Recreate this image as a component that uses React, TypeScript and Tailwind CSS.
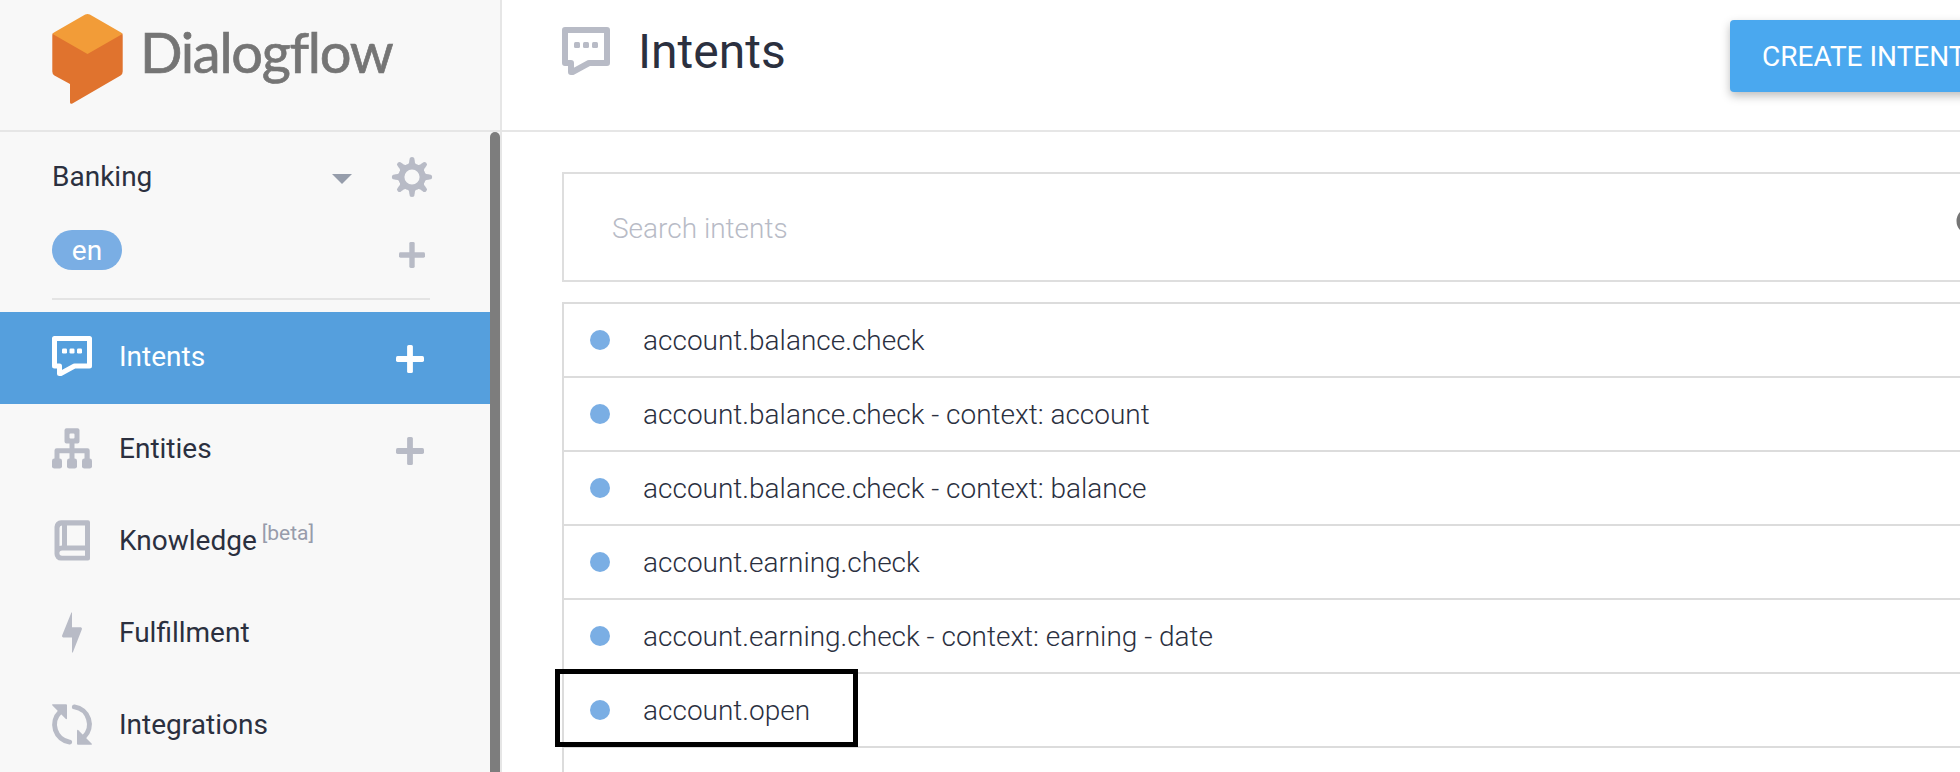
import type { ReactNode } from "react";

const intents = [
  "account.balance.check",
  "account.balance.check - context: account",
  "account.balance.check - context: balance",
  "account.earning.check",
  "account.earning.check - context: earning - date",
  "account.open",
];

function ChatIcon({ className }: { className: string }) {
  return (
    <svg viewBox="0 0 48 48" className={className} fill="none">
      <path d="M3 3H45V36H27L10.5 45H9V36H3Z" stroke="currentColor" strokeWidth="6" strokeLinejoin="round" />
      <g fill="currentColor">
        <rect x="12" y="15" width="6" height="6" rx="1.5" />
        <rect x="21" y="15" width="6" height="6" rx="1.5" />
        <rect x="30" y="15" width="6" height="6" rx="1.5" />
      </g>
    </svg>
  );
}

function EntitiesIcon() {
  return (
    <svg viewBox="0 0 40 40" className="size-10 shrink-0 overflow-visible" fill="currentColor">
      <path
        fillRule="evenodd"
        d="M14.5 0.3H25.5A2 2 0 0 1 27.5 2.3V13.4A2 2 0 0 1 25.5 15.4H22.5V20.3H35.5A2.2 2.2 0 0 1 37.7 22.5V31H32.5V25.3H22.5V31H17.5V25.3H7.5V31H2.5V22.5A2.2 2.2 0 0 1 4.7 20.3H17.5V15.4H14.5A2 2 0 0 1 12.5 13.4V2.3A2 2 0 0 1 14.5 0.3ZM18.5 5.4A1 1 0 0 0 17.5 6.4V9.6A1 1 0 0 0 18.5 10.6H21.5A1 1 0 0 0 22.5 9.6V6.4A1 1 0 0 0 21.5 5.4Z"
      />
      <rect x="0" y="30.4" width="10" height="10.2" rx="2.4" />
      <rect x="15" y="30.4" width="10" height="10.2" rx="2.4" />
      <rect x="30" y="30.4" width="10" height="10.2" rx="2.4" />
    </svg>
  );
}

function BookIcon() {
  return (
    <svg viewBox="0 0 40 40" className="size-10 shrink-0 overflow-visible" fill="currentColor">
      <path
        fillRule="evenodd"
        d="M9 0.3H36A2 2 0 0 1 38 2.3V38.6A2 2 0 0 1 36 40.6H9A6.5 6.5 0 0 1 2.5 34.1V6.8A6.5 6.5 0 0 1 9 0.3ZM10 5.4Q7.5 5.6 7.5 8V26Q8.6 25.4 10 25.4ZM15 5.4V25.4H33V5.4ZM10 30.5A2.6 2.6 0 0 0 10 35.7H33V30.5Z"
      />
    </svg>
  );
}

function BoltIcon() {
  return (
    <svg viewBox="0 0 40 40" className="size-10 shrink-0 overflow-visible" fill="currentColor">
      <path d="M20 0.6V15.3H28.8Q30.4 15.6 29.9 17.2L20.8 40.4H20V25.4H11.2Q9.6 25 10.1 23.4L19.4 0.6Z" />
    </svg>
  );
}

function SyncIcon() {
  return (
    <svg viewBox="0 0 40 40" className="size-10 shrink-0 overflow-visible" fill="currentColor">
      <path d="M0.6 0.3H14A1 1 0 0 1 15 1.3V14.4Q14.8 15.8 13.6 14.8L0.2 1.2Q-0.2 0.4 0.6 0.3Z" />
      <path d="M39.4 40.7H26A1 1 0 0 1 25 39.7V26.6Q25.2 25.2 26.4 26.2L39.8 39.8Q40.2 40.6 39.4 40.7Z" />
      <g fill="none" stroke="currentColor" strokeWidth="5" strokeLinecap="round">
        <path d="M8 8A17.6 17.6 0 0 0 17.6 38.1" />
        <path d="M22.4 2.9A17.6 17.6 0 0 1 32 33" />
      </g>
    </svg>
  );
}

function GearIcon() {
  return (
    <svg viewBox="-20 -20 40 40" className="size-10 shrink-0 overflow-visible" stroke="currentColor" fill="none">
      <circle r="10.6" strokeWidth="6" />
      <g strokeWidth="5" strokeLinecap="round">
        {[0, 45, 90, 135, 180, 225, 270, 315].map((a) => (
          <g key={a} transform={`rotate(${a})`}>
            <path d="M0 -12V-17.6" />
            <path d="M-5.4 -12.2Q-2.5 -13 -2.5 -16.8H2.5Q2.5 -13 5.4 -12.2Z" fill="currentColor" stroke="none" />
          </g>
        ))}
      </g>
    </svg>
  );
}

function PlusIcon({ className }: { className: string }) {
  return (
    <svg viewBox="0 0 28 28" className={className} fill="currentColor">
      <rect x="11.1" y="0" width="5.8" height="28" rx="1.6" />
      <rect x="0" y="11.1" width="28" height="5.8" rx="1.6" />
    </svg>
  );
}

function Logo() {
  return (
    <svg viewBox="0 0 72 92" className="h-[92px] w-[72px] shrink-0">
      <path
        d="M0.6 19.4Q0.3 20.4 0.3 22V57.6Q0.3 60.4 2.4 61.6L18 70V88.4Q18.2 90.4 20.4 89.5L68.6 61.6Q70.7 60.4 70.7 57.6V22Q70.7 20.4 70.4 19.4L35.5 30Z"
        fill="#e0732e"
      />
      <path d="M33.2 0.6Q35.5 -0.6 37.8 0.6L68.6 18.2Q70 19 70.4 20L35.5 40L0.6 20Q1 19 2.4 18.2Z" fill="#f29c38" />
    </svg>
  );
}

function NavItem({
  icon,
  label,
  active,
  add,
  tag,
}: {
  icon: ReactNode;
  label: string;
  active?: boolean;
  add?: boolean;
  tag?: string;
}) {
  return (
    <a
      className={
        active
          ? "flex h-[92px] items-center bg-[#559fdd] pr-[66px] pb-1 pl-[52px] text-white"
          : "flex h-[92px] items-center pr-[66px] pb-1 pl-[52px] text-[#b8bbc6]"
      }
    >
      {icon}
      <span className={active ? "ml-[27px] pt-0.5 text-white" : "ml-[27px] pt-0.5 text-[#2b303f]"}>{label}</span>
      {tag && <span className="ml-[5px] pb-3.5 text-[21px] leading-none text-[#979cab]">{tag}</span>}
      {add && <PlusIcon className="mt-[5px] ml-auto size-7" />}
    </a>
  );
}

export default function App() {
  return (
    <div className="flex h-[772px] w-full overflow-hidden bg-white font-['Roboto',sans-serif] text-[28px] leading-8 text-[#2b303f]">
      <aside className="flex w-[502px] shrink-0 flex-col border-r-2 border-[#e6e6e6] bg-[#f8f8f8]">
        <div className="flex h-[132px] shrink-0 items-start border-b-2 border-[#e6e6e6] pt-[14px] pl-[52px]">
          <Logo />
          <span className="mt-1 ml-4 font-['Lato',sans-serif] text-[56px] leading-[68px] tracking-[-1.3px] text-[#757575] [-webkit-text-stroke:0.7px_#757575] [font-variant-ligatures:none]">
            Dialogflow
          </span>
        </div>
        <div className="flex min-h-0 flex-1">
          <div className="w-[490px] shrink-0">
            <div className="mr-[60px] ml-[52px] h-[168px] border-b-2 border-[#e4e4e4]">
              <div className="flex items-center pt-[25px]">
                <span>Banking</span>
                <svg viewBox="0 0 20 10" className="mt-[4px] ml-auto h-[10px] w-5 fill-[#969dab]">
                  <path d="M0 0H20L10 10Z" />
                </svg>
                <span className="-mr-[2px] ml-10 flex text-[#b8bbc6]">
                  <GearIcon />
                </span>
              </div>
              <div className="flex pt-[33px] pr-[5px]">
                <span className="flex h-10 w-[70px] items-center justify-center rounded-full bg-[#7aaee4] pt-0.5 text-white">
                  en
                </span>
                <PlusIcon className="mt-3 ml-auto size-[26px] text-[#b8bbc6]" />
              </div>
            </div>
            <nav className="pt-3">
              <NavItem icon={<ChatIcon className="size-10 shrink-0" />} label="Intents" active add />
              <NavItem icon={<EntitiesIcon />} label="Entities" add />
              <NavItem icon={<BookIcon />} label="Knowledge" tag="[beta]" />
              <NavItem icon={<BoltIcon />} label="Fulfillment" />
              <NavItem icon={<SyncIcon />} label="Integrations" />
            </nav>
          </div>
          <div className="w-[10px] rounded-t-[5px] bg-[#7d7d7d]" />
        </div>
      </aside>

      <main className="min-w-0 flex-1">
        <header className="flex h-[132px] items-start border-b-2 border-[#e6e6e6] pl-[60px]">
          <ChatIcon className="mt-[27px] size-12 shrink-0 text-[#b8bbc6]" />
          <h1 className="mt-6 ml-7 text-[48px] leading-[56px]">Intents</h1>
          <button className="mt-5 -mr-10 ml-auto h-[72px] w-[270px] shrink-0 rounded bg-[#4aa8ef] pt-0.5 pl-8 text-left whitespace-nowrap text-white shadow-[0_4px_10px_rgba(0,0,0,0.26)]">
            CREATE INTENT
          </button>
        </header>

        <section className="pt-10 pl-[60px]">
          <div className="flex h-[110px] items-center border-2 border-r-0 border-[#dedede] pl-12">
            <span className="pt-[3px] font-light text-[#b8bbc6]">Search intents</span>
            <svg viewBox="0 0 36 36" className="-mr-8 mb-[4px] ml-auto size-9 shrink-0" fill="none" stroke="#757575" strokeWidth="5">
              <circle cx="14" cy="14" r="11" />
              <path d="M22 22L33 33" />
            </svg>
          </div>
          <ul className="mt-5 border-t-2 border-l-2 border-[#dcdcdc]">
            {intents.map((name) => (
              <li
                key={name}
                className="relative flex h-[74px] items-center border-b-2 border-[#dcdcdc] pl-[26px] font-light"
              >
                <span className="size-5 rounded-full bg-[#7aaee4]" />
                <span className="ml-[33px] pt-0.5">{name}</span>
                {name === "account.open" && (
                  <span className="absolute -top-[5px] -left-[9px] h-[78px] w-[303px] border-5 border-black" />
                )}
              </li>
            ))}
            <li className="h-[74px]" />
          </ul>
        </section>
      </main>
    </div>
  );
}
